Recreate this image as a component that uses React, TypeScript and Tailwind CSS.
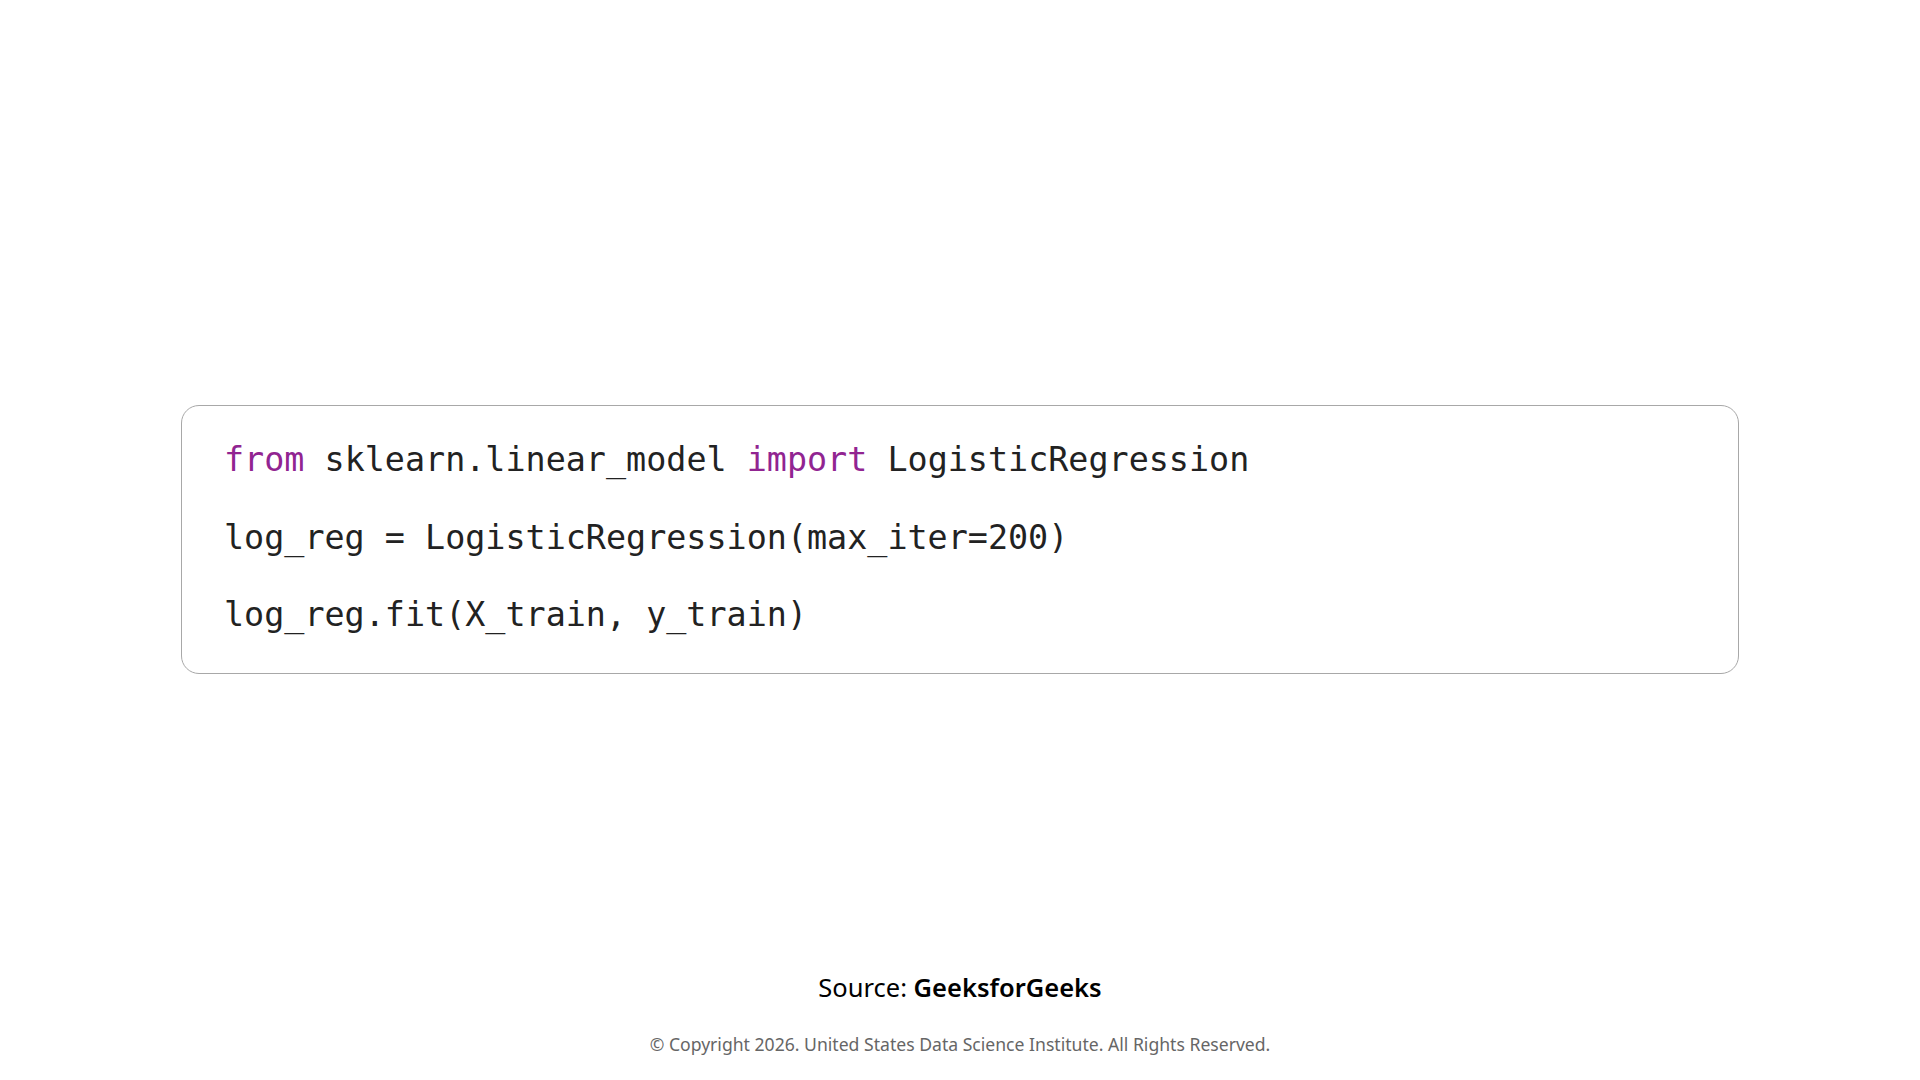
import React from "react";

const mono = { fontFamily: '"DejaVu Sans Mono", monospace' };

export default function App() {
  return (
    <div className="w-[1920px] h-[1080px] bg-white flex flex-col items-center overflow-hidden">
      <div
        className="mt-[405px] w-[1558px] h-[269px] border border-[#a8a8a8] rounded-[18px] pl-[42px] pt-[15px] flex flex-col text-[#222222] text-[33.4px] leading-[77.5px]"
        style={mono}
      >
        <div className="whitespace-pre">
          <span className="text-[#912491]">from</span> sklearn.linear_model{" "}
          <span className="text-[#912491]">import</span> LogisticRegression
        </div>
        <div className="whitespace-pre">log_reg = LogisticRegression(max_iter=200)</div>
        <div className="whitespace-pre">log_reg.fit(X_train, y_train)</div>
      </div>
      <div
        className="mt-[295px] text-[25.5px] leading-[36px] text-black"
        style={{ fontFamily: '"Noto Sans", "Open Sans", sans-serif' }}
      >
        Source: <span className="font-semibold">GeeksforGeeks</span>
      </div>
      <div
        className="mt-[27px] text-[17.6px] leading-[24px] text-[#666666]"
        style={{ fontFamily: '"Noto Sans", "Open Sans", sans-serif' }}
      >
        © Copyright 2026. United States Data Science Institute. All Rights Reserved.
      </div>
    </div>
  );
}
